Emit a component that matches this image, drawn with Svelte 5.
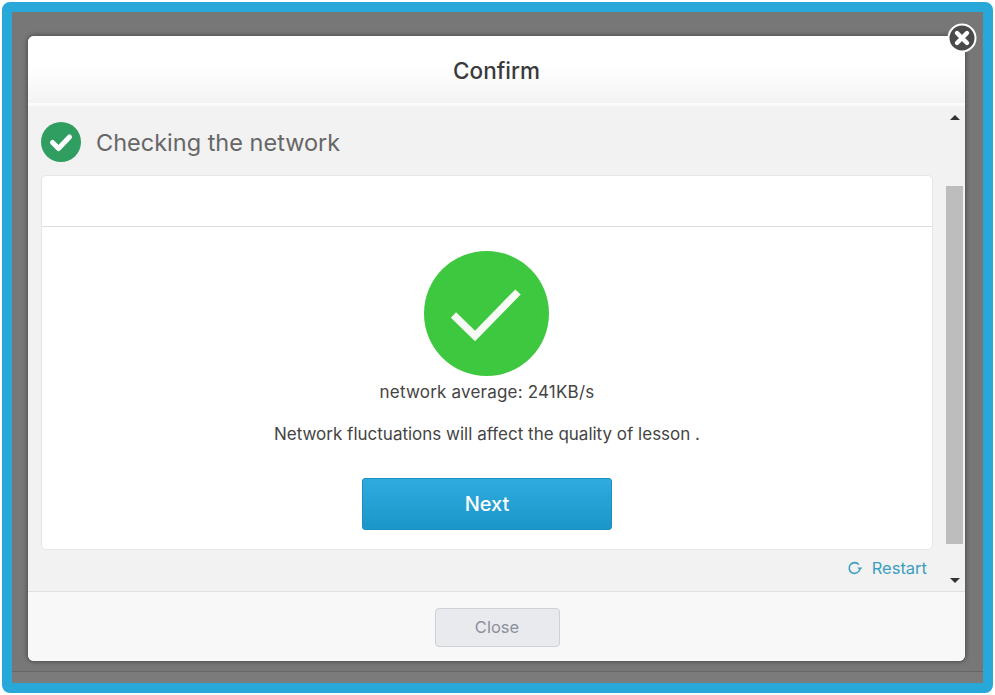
<script lang="ts">
  let speed = 241;
</script>

<div class="frame">
  <div class="stage">
    <div class="modal">
      <button class="dismiss" aria-label="Close">
        <svg viewBox="0 0 30 30" width="30" height="30">
          <circle cx="15" cy="15" r="13.5" fill="#4a4a4a" stroke="#fff" stroke-width="2" />
          <path d="M10 10 L20 20 M20 10 L10 20" stroke="#fff" stroke-width="4.4" stroke-linecap="round" />
        </svg>
      </button>

      <header class="head">Confirm</header>

      <div class="body">
        <div class="content">
          <div class="step">
            <svg viewBox="0 0 40 40" width="40" height="40">
              <circle cx="20" cy="20" r="20" fill="#2f9e60" />
              <path d="M11.5 20.5 L17.5 26.5 L28.5 15" fill="none" stroke="#fff" stroke-width="5" stroke-linecap="round" stroke-linejoin="round" />
            </svg>
            <h2>Checking the network</h2>
          </div>

          <section class="card">
            <div class="card-top"></div>
            <div class="card-main">
              <div class="ok">
                <svg viewBox="0 0 125 125" width="125" height="125">
                  <path d="M29.5 64 L51 85 L94 41" fill="none" stroke="#f6fbf6" stroke-width="7.5" />
                </svg>
              </div>
              <p class="avg">network average: {speed}KB/s</p>
              <p class="note">Network fluctuations will affect the quality of lesson .</p>
              <button class="next">Next</button>
            </div>
          </section>

          <div class="restart">
            <svg viewBox="0 0 16 16" width="16" height="16">
              <path d="M11.8 4.6 A5.4 5.4 0 1 0 12.6 10" fill="none" stroke="#3d9fc0" stroke-width="1.6" />
              <path d="M10.4 7.6 L15.4 7.6 L12.9 10.6 Z" fill="#3d9fc0" />
            </svg>
            <a href="#restart">Restart</a>
          </div>
        </div>

        <div class="scroll">
          <span class="arrow up"></span>
          <span class="thumb"></span>
          <span class="arrow down"></span>
        </div>
      </div>

      <footer class="foot">
        <button class="close">Close</button>
      </footer>
    </div>
  </div>
  <div class="strip"></div>
</div>

<style>
  :global(body) {
    margin: 0;
    background: #fff;
  }

  .frame {
    box-sizing: border-box;
    width: 991px;
    height: 691px;
    margin: 2px;
    border: 10px solid #28a8d8;
    border-radius: 8px;
    display: flex;
    flex-direction: column;
    background: #777;
    font-family: Inter, "Noto Sans", sans-serif;
  }

  .stage {
    padding: 24px 18px 0 16px;
    height: 660px;
    box-sizing: border-box;
    border-bottom: 1px solid #666;
  }

  .strip {
    flex: 1;
    background: #7b7b7b;
  }

  .modal {
    position: relative;
    display: flex;
    flex-direction: column;
    width: 937px;
    height: 625px;
    background: #f2f2f2;
    border-radius: 6px;
    box-shadow: 0 0 4px 1px rgba(0, 0, 0, 0.35);
  }

  .dismiss {
    position: absolute;
    top: -13px;
    right: -12px;
    padding: 0;
    border: 0;
    background: none;
    line-height: 0;
  }

  .head {
    height: 65px;
    padding-top: 2px;
    border-bottom: 3px solid #fbfbfb;
    border-radius: 6px 6px 0 0;
    background: linear-gradient(#fff 45%, #f3f3f3);
    display: flex;
    align-items: center;
    justify-content: center;
    font-size: 22.5px;
    font-weight: 500;
    color: #3a3a3a;
  }

  .body {
    flex: 1;
    display: flex;
    min-height: 0;
  }

  .content {
    flex: 1;
    padding: 16px 13px 0;
  }

  .step {
    display: flex;
    align-items: center;
    gap: 15px;
    height: 40px;
    margin-bottom: 13px;
  }

  h2 {
    margin: 0;
    font-size: 23.5px;
    font-weight: 400;
    color: #666;
  }

  .card {
    box-sizing: border-box;
    height: 375px;
    background: #fff;
    border: 1px solid #e6e6e6;
    border-radius: 5px;
  }

  .card-top {
    height: 50px;
    border-bottom: 1px solid #dcdcdc;
  }

  .card-main {
    display: flex;
    flex-direction: column;
    align-items: center;
    padding-top: 24px;
  }

  .ok {
    width: 125px;
    height: 125px;
    margin-right: 1px;
    border-radius: 50%;
    background: #3ec83f;
    line-height: 0;
  }

  .avg,
  .note {
    margin: 0;
    font-size: 17px;
    line-height: 24px;
    color: #444;
  }

  .avg {
    margin-top: 4px;
    letter-spacing: 0.2px;
  }

  .note {
    margin-top: 18px;
  }

  .next {
    box-sizing: border-box;
    width: 250px;
    height: 52px;
    margin-top: 32px;
    padding-bottom: 2px;
    border: 1px solid #1a8fc0;
    border-radius: 3px;
    background: linear-gradient(#2fabdf, #1b96c9);
    color: #fff;
    font: 500 20px Inter, sans-serif;
  }

  .restart {
    display: flex;
    align-items: center;
    justify-content: flex-end;
    gap: 9px;
    height: 35px;
    padding-right: 6px;
    font-size: 16.5px;
  }

  .restart a {
    color: #3d9fc0;
    text-decoration: none;
  }

  .scroll {
    width: 19px;
    padding-right: 2px;
    box-sizing: border-box;
    display: flex;
    flex-direction: column;
    align-items: center;
  }

  .thumb {
    width: 17px;
    height: 358px;
    margin-top: 66px;
    background: #bdbdbd;
  }

  .arrow {
    width: 0;
    height: 0;
    border-left: 5px solid transparent;
    border-right: 5px solid transparent;
  }

  .arrow.up {
    margin-top: 9px;
    border-bottom: 5px solid #333;
  }

  .arrow.down {
    margin-top: 34px;
    border-top: 5px solid #333;
  }

  .foot {
    box-sizing: border-box;
    height: 70px;
    border-top: 1px solid #e0e0e0;
    border-radius: 0 0 6px 6px;
    background: #f8f8f8;
    display: flex;
    justify-content: center;
    padding: 16px 0 0 1px;
  }

  .close {
    box-sizing: border-box;
    width: 125px;
    height: 39px;
    padding-bottom: 3px;
    border: 1px solid #cfd0d4;
    border-radius: 4px;
    background: #e9eaee;
    color: #8d8f9a;
    font: 400 16.5px Inter, sans-serif;
  }
</style>
